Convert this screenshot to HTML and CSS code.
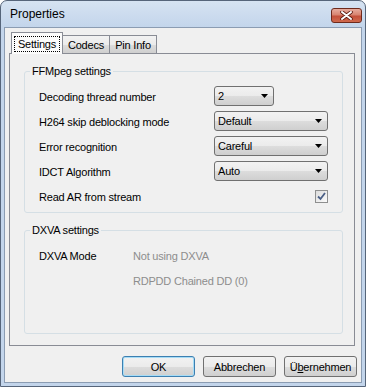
FILE: index.html
```
<!DOCTYPE html>
<html lang="de">
<head>
    <meta charset="UTF-8">
    <title>Properties</title>
    <link rel="stylesheet" href="styles.css">
</head>
<body>
    <div class="window">
        <div class="titlebar">
            <span class="title">Properties</span>
            <div class="close">
                <svg width="13" height="9" viewBox="0 0 13 9">
                    <path d="M2 1 L11 8 M11 1 L2 8" stroke="#5a1a10" stroke-width="3.6" stroke-linecap="round"/>
                    <path d="M2 1 L11 8 M11 1 L2 8" stroke="#fff" stroke-width="2" stroke-linecap="round"/>
                </svg>
            </div>
        </div>

        <div class="client">
            <div class="tab-strip">
                <div class="tab active tab-settings"><span class="focus">Settings</span></div>
                <div class="tab tab-codecs">Codecs</div>
                <div class="tab tab-pin">Pin Info</div>
            </div>

            <div class="tab-page">
                <fieldset class="group">
                    <legend>FFMpeg settings</legend>
                    <div class="rows ffmpeg-rows">
                        <span class="label">Decoding thread number</span>
                        <div class="combo narrow"><span>2</span><svg class="arrow" width="7" height="4"><polygon points="0,0 7,0 3.5,4" fill="#000"/></svg></div>

                        <span class="label">H264 skip deblocking mode</span>
                        <div class="combo"><span>Default</span><svg class="arrow" width="7" height="4"><polygon points="0,0 7,0 3.5,4" fill="#000"/></svg></div>

                        <span class="label">Error recognition</span>
                        <div class="combo"><span>Careful</span><svg class="arrow" width="7" height="4"><polygon points="0,0 7,0 3.5,4" fill="#000"/></svg></div>

                        <span class="label">IDCT Algorithm</span>
                        <div class="combo"><span>Auto</span><svg class="arrow" width="7" height="4"><polygon points="0,0 7,0 3.5,4" fill="#000"/></svg></div>

                        <span class="label">Read AR from stream</span>
                        <div class="checkbox">
                            <svg width="9" height="9" viewBox="0 0 9 9">
                                <path d="M1 4.5 L3.5 7 L8 1" fill="none" stroke="#4a5f86" stroke-width="1.8"/>
                            </svg>
                        </div>
                    </div>
                </fieldset>

                <fieldset class="group dxva">
                    <legend>DXVA settings</legend>
                    <div class="rows dxva-rows">
                        <span class="label">DXVA Mode</span>
                        <span class="value">Not using DXVA</span>
                        <span></span>
                        <span class="value">RDPDD Chained DD (0)</span>
                    </div>
                </fieldset>
            </div>

            <div class="buttons">
                <button class="btn default">OK</button>
                <button class="btn">Abbrechen</button>
                <button class="btn">Ü<u>b</u>ernehmen</button>
            </div>
        </div>
    </div>
</body>
</html>
```

FILE: styles.css
```
body {
    margin: 0;
    font-family: "Liberation Sans", Arial, sans-serif;
    font-size: 11px;
    letter-spacing: -0.2px;
    color: #000;
    background: #fff;
}

/* Window frame */
.window {
    width: 366px;
    height: 387px;
    box-sizing: border-box;
    border: 1px solid #56657a;
    border-radius: 7px 7px 0 0;
    background: linear-gradient(#d6e3f2, #c3d5eb 26px, #c3d5eb);
    padding: 0 3px 3px;
    display: flex;
    flex-direction: column;
}

.titlebar {
    height: 26px;
    display: flex;
    align-items: center;
    justify-content: space-between;
    padding-left: 6px;
    padding-right: 0;
}

.title {
    font-size: 12px;
    letter-spacing: 0;
}

.close {
    width: 31px;
    height: 15px;
    box-sizing: border-box;
    border: 1px solid #6e2a1c;
    border-radius: 3px;
    background: linear-gradient(#e7ac9e, #d88470 45%, #c4503a 55%, #cf6a4e);
    display: flex;
    align-items: center;
    justify-content: center;
    margin-top: 2px;
}

.client {
    flex: 1;
    background: #f0f0f0;
    border: 1px solid #8b9cb2;
    padding: 4px 4px 0 4px;
    display: flex;
    flex-direction: column;
}

/* Tabs */
.tab-strip {
    display: flex;
    align-items: flex-end;
    height: 21px;
    padding-left: 2px;
}

.tab {
    height: 18px;
    box-sizing: border-box;
    border: 1px solid #898c95;
    border-bottom: none;
    border-left: none;
    background: linear-gradient(#f2f2f2, #ebebeb 50%, #dddddd 50%, #cfcfcf);
    display: flex;
    align-items: center;
    justify-content: center;
}

.tab.active {
    height: 22px;
    border-left: 1px solid #898c95;
    border-right: 1px solid #898c95;
    background: #fbfbfb;
    margin-bottom: -1px;
    position: relative;
    z-index: 1;
}

.tab-settings { width: 52px; }
.tab-codecs { width: 47px; }
.tab-pin { width: 47px; }

.focus {
    border: 1px dotted #000;
    padding: 1px 3px;
    line-height: 12px;
}

.tab-page {
    height: 293px;
    box-sizing: border-box;
    border: 1px solid #898c95;
    margin-right: 2px;
    padding: 11px 11px 11px 14px;
    display: flex;
    flex-direction: column;
    gap: 11px;
}

/* Group boxes */
.group {
    margin: 0;
    padding: 0;
    border: 1px solid #d5dfe5;
    border-radius: 3px;
}

.group legend {
    margin-left: 5px;
    padding: 0 2px;
    line-height: 13px;
}

.group.dxva {
    flex: 1;
}

.rows {
    display: grid;
    grid-auto-rows: 25px;
    align-items: center;
    padding: 6px 14px 3px 14px;
}

.ffmpeg-rows {
    grid-template-columns: 175px 114px;
}

.dxva-rows {
    grid-template-columns: 94px 1fr;
}

.value {
    color: #8d8d8d;
}

/* Controls */
.combo {
    height: 20px;
    width: 114px;
    box-sizing: border-box;
    border: 1px solid #707070;
    border-radius: 3px;
    background: linear-gradient(#f2f2f2, #ebebeb 50%, #dddddd 50%, #cfcfcf);
    display: flex;
    align-items: center;
    justify-content: space-between;
    padding: 0 5px 0 3px;
    margin-top: -2px;
}

.combo.narrow {
    width: 60px;
}

.checkbox {
    justify-self: end;
    width: 13px;
    height: 13px;
    box-sizing: border-box;
    border: 1px solid #8e8f8f;
    background: linear-gradient(135deg, #dcdcdc, #fbfbfb);
    display: flex;
    align-items: center;
    justify-content: center;
    margin-top: -1px;
}

.buttons {
    display: flex;
    justify-content: flex-end;
    gap: 8px;
    padding-top: 10px;
}

.btn {
    width: 73px;
    height: 21px;
    box-sizing: border-box;
    border: 1px solid #707070;
    border-radius: 3px;
    background: linear-gradient(#f2f2f2, #ebebeb 50%, #dddddd 50%, #cfcfcf);
    font: inherit;
    letter-spacing: inherit;
    color: #000;
    padding: 0;
}

.btn.default {
    border-color: #3c7fb1;
    box-shadow: inset 0 0 0 1px #a6dcf6;
}
```
